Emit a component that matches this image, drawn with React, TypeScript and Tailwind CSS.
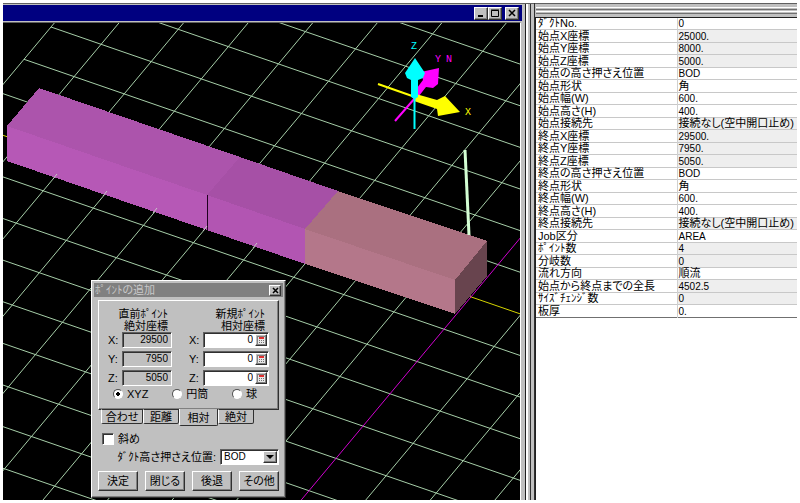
import { useId, useState, type ReactNode } from "react";

type Point = [number, number];

const ORIGIN: Point = [48, 4];
const ACROSS: Point = [50.1, 17.3];
const DOWN: Point = [-27, 32.3];

function at(col: number, row: number): Point {
  return [
    ORIGIN[0] + col * ACROSS[0] + row * DOWN[0],
    ORIGIN[1] + col * ACROSS[1] + row * DOWN[1],
  ];
}

function GridLine({ from, to, stroke }: { from: Point; to: Point; stroke: string }) {
  return <line x1={from[0]} y1={from[1]} x2={to[0]} y2={to[1]} stroke={stroke} strokeWidth={1} />;
}

function Scene() {
  const rows = Array.from({ length: 26 }, (_, i) => i - 6);
  const cols = Array.from({ length: 24 }, (_, i) => i);
  return (
    <svg
      className="absolute inset-0 h-full w-full bg-black"
      viewBox="0 0 517 477"
      preserveAspectRatio="xMinYMin slice"
      role="img"
      aria-label="3D"
    >
      {rows.map((r) => (
        <GridLine key={r} from={at(0, r)} to={at(24, r)} stroke={r === 3 ? "#d4d400" : "#a6cea8"} />
      ))}
      {cols.map((c) => (
        <GridLine key={c} from={at(c, -10)} to={at(c, 22)} stroke={c === 10 ? "#d000d0" : "#a6cea8"} />
      ))}
      <g shapeRendering="crispEdges">
        <polygon points="36,65 237,134 204,172 4,103" fill="#ac54ac" />
        <polygon points="237,134 335,168 302,206 204,172" fill="#a650a6" />
        <polygon points="335,168 484,218 452,257 302,206" fill="#aa7080" />
        <polygon points="4,103 204,172 204,207 4,138" fill="#b658b6" />
        <polygon points="204,172 302,206 302,241 204,207" fill="#b255b2" />
        <polygon points="302,206 452,257 452,291 302,241" fill="#b4778a" />
        <polygon points="452,257 484,218 484,253 452,291" fill="#68444e" />
        <line x1="204.500" y1="172" x2="204.500" y2="207" stroke="#200020" />
      </g>
      <path d="M50 156l4-5M100 173l4-5M150 190l4-5M200 208l4-5M250 225l4-5" stroke="#c8c8c8" />
      <path d="M462 127L466 212" stroke="#d4ffd4" strokeWidth="3" />
      <g>
        <path d="M412 75L392 98" stroke="#ff00ff" strokeWidth="2" />
        <path d="M408 73L420 57L418 49L436 45L435 61L430 65L423 64L412 78Z" fill="#ff00ff" />
        <path d="M375 61L412 74" stroke="#ffff00" strokeWidth="2" />
        <path d="M413 71L434 77L442 73L457 89L435 93L434 86L411 78Z" fill="#ffff00" />
        <path d="M411.500 74V106" stroke="#00ffff" strokeWidth="2" />
        <path d="M412 35L422 50L420 55L415 57V74L412 76L408 74V57L404 55L402 50Z" fill="#00ffff" />
      </g>
      <g className="font-['Liberation_Mono',monospace] text-[10px]">
        <text x="408" y="26" fill="#00ffff">Z</text>
        <text x="432" y="39" fill="#ff00ff">Y</text>
        <text x="443" y="39" fill="#ff00ff">N</text>
        <text x="462" y="92" fill="#ffff00">X</text>
      </g>
    </svg>
  );
}

const raised =
  "border border-t-white border-l-white border-r-[#303030] border-b-[#303030] bg-[#c0c0c0] shadow-[inset_-1px_-1px_0_#808080]";
const sunken =
  "border border-t-[#606060] border-l-[#606060] border-r-white border-b-white shadow-[inset_1px_1px_0_#303030]";

function CaptionButton({ label, children }: { label: string; children: ReactNode }) {
  return (
    <button aria-label={label} className={`flex h-[13px] w-[14px] items-center justify-center ${raised}`}>
      <svg className="h-2 w-2" viewBox="0 0 8 8" fill="none" stroke="black">
        {children}
      </svg>
    </button>
  );
}

function ViewWindow() {
  return (
    <section className="relative flex min-w-0 flex-1 flex-col border-t border-[#606060] bg-[#c0c0c0] pt-px">
      <header className="mr-px flex h-4 shrink-0 items-center justify-end bg-[#000080] pr-[3px]">
        <CaptionButton label="最小化">
          <path d="M1 7h5" strokeWidth="2" />
        </CaptionButton>
        <CaptionButton label="最大化">
          <path d="M0.500 1.500h7v6h-7zM0 1h8" />
        </CaptionButton>
        <span className="w-[3px]" />
        <CaptionButton label="閉じる">
          <path d="M1 1l6 6M7 1l-6 6" strokeWidth="1.500" />
        </CaptionButton>
      </header>
      <div className="mt-px mr-[2px] flex min-h-0 flex-1 border-t border-r border-t-[#606060] border-r-white bg-black">
        <div className="relative flex-1 overflow-hidden">
          <Scene />
          <PointDialog />
        </div>
      </div>
    </section>
  );
}

function CalcIcon() {
  return (
    <svg className="h-2 w-2" viewBox="0 0 8 8">
      <rect x="0" y="0" width="8" height="8" fill="#e8e8e8" />
      <path d="M0 0.500h8M0.500 0v8" stroke="#808080" />
      <path d="M2 2h5" stroke="#e03030" strokeWidth="2" />
      <path d="M2 4.500h1M4 4.500h1M6 4.500h1M2 6.500h1M4 6.500h1M6 6.500h1" stroke="#707070" />
    </svg>
  );
}

function Coordinates({ title, values, editable }: { title: [string, string]; values: string[]; editable?: boolean }) {
  const id = useId();
  return (
    <div className={editable ? "w-20" : "w-16"}>
      <h2 className="pr-1 text-right leading-3">
        {title[0]}
        <br />
        {title[1]}
      </h2>
      <div className="flex flex-col gap-[3px]">
        {["X", "Y", "Z"].map((axis, i) => (
          <div key={axis} className="flex h-4 items-center">
            <label htmlFor={id + axis} className="w-[14px] shrink-0">
              {axis}:
            </label>
            <div className={`flex h-4 min-w-0 flex-1 items-center p-px ${sunken} ${editable ? "bg-white" : ""}`}>
              <input
                id={id + axis}
                readOnly={!editable}
                defaultValue={values[i]}
                className="w-full min-w-0 bg-transparent pr-[2px] text-right text-[10px] outline-none"
              />
              {editable && (
                <button aria-label="電卓" className={`flex h-3 w-3 shrink-0 items-center justify-center ${raised}`}>
                  <CalcIcon />
                </button>
              )}
            </div>
          </div>
        ))}
      </div>
    </div>
  );
}

function Radio({ label, checked }: { label: string; checked?: boolean }) {
  return (
    <label className="flex items-center gap-1">
      <input
        type="radio"
        name="coordinate-system"
        defaultChecked={checked}
        className="h-[10px] w-[10px] appearance-none rounded-full border border-t-[#505050] border-r-white border-b-white border-l-[#505050] bg-white checked:bg-[radial-gradient(circle,black_0_2px,white_2px)]"
      />
      {label}
    </label>
  );
}

const tabs = ["合わせ", "距離", "相対", "絶対"];

function PointDialog() {
  const [tab, setTab] = useState("相対");
  return (
    <section
      role="dialog"
      aria-label="ポイントの追加"
      className={`absolute top-[257px] left-[88px] w-[195px] p-[2px] ${raised}`}
    >
      <header className="flex h-[14px] items-center justify-between bg-[#808080] pr-[2px] pl-px text-[#c8c8c8]">
        <h1>ﾎﾟｲﾝﾄの追加</h1>
        <button aria-label="閉じる" className={`flex h-[11px] w-3 items-center justify-center ${raised}`}>
          <svg className="h-[7px] w-[7px]" viewBox="0 0 7 7" stroke="black" strokeWidth="1.500">
            <path d="M1 1l5 5M6 1l-5 5" />
          </svg>
        </button>
      </header>
      <div className="px-1 pt-[3px] pb-1">
        <div className={`h-[110px] px-[9px] pt-[7px] ${raised}`}>
          <div className="flex justify-between">
            <Coordinates title={["直前ﾎﾟｲﾝﾄ", "絶対座標"]} values={["29500", "7950", "5050"]} />
            <Coordinates title={["新規ﾎﾟｲﾝﾄ", "相対座標"]} values={["0", "0", "0"]} editable />
          </div>
          <div className="mt-[2px] flex justify-between pr-3 pl-[5px]">
            <Radio label="XYZ" checked />
            <Radio label="円筒" />
            <Radio label="球" />
          </div>
        </div>
        <div role="tablist" className="-mt-px flex h-[17px] items-start pl-[3px]">
          {tabs.map((name) => (
            <button
              key={name}
              role="tab"
              aria-selected={name === tab}
              onClick={() => setTab(name)}
              className={`rounded-b-[2px] border-r border-b border-l border-r-[#303030] border-b-[#303030] border-l-white bg-[#c0c0c0] ${
                name === tab ? "h-[17px] pt-[2px]" : "h-[15px] border-t border-t-[#303030]"
              } ${name === "合わせ" ? "w-[42px]" : name === tab ? "w-[39px]" : "w-9"}`}
            >
              {name}
            </button>
          ))}
        </div>
        <label className="mt-[7px] flex items-center gap-1 pl-1">
          <input type="checkbox" className={`h-3 w-3 appearance-none bg-white checked:bg-black ${sunken}`} />
          斜め
        </label>
        <div className="mt-1 flex items-center justify-end gap-1">
          <label htmlFor="height-position">ﾀﾞｸﾄ高さ押さえ位置:</label>
          <div className={`relative flex h-4 w-[59px] items-center bg-white ${sunken}`}>
            <select
              id="height-position"
              className="w-full appearance-none bg-transparent pl-[3px] text-[10px] outline-none"
            >
              <option>BOD</option>
            </select>
            <span
              className={`pointer-events-none absolute top-px right-px flex h-3 w-[14px] items-center justify-center ${raised}`}
            >
              <svg className="h-1 w-2" viewBox="0 0 8 4">
                <path d="M0 0h8L4 4z" />
              </svg>
            </span>
          </div>
        </div>
        <div className="mt-[6px] flex justify-between">
          {["決定", "閉じる", "後退", "その他"].map((name) => (
            <button key={name} className={`h-5 w-10 ${raised}`}>
              {name}
            </button>
          ))}
        </div>
      </div>
    </section>
  );
}

type Property = { name: string; value: string; locked?: boolean };

const properties: Property[] = [
  { name: "ﾀﾞｸﾄNo.", value: "0" },
  { name: "始点X座標", value: "25000.", locked: true },
  { name: "始点Y座標", value: "8000.", locked: true },
  { name: "始点Z座標", value: "5000.", locked: true },
  { name: "始点の高さ押さえ位置", value: "BOD" },
  { name: "始点形状", value: "角" },
  { name: "始点幅(W)", value: "600." },
  { name: "始点高さ(H)", value: "400." },
  { name: "始点接続先", value: "接続なし(空中開口止め)", locked: true },
  { name: "終点X座標", value: "29500.", locked: true },
  { name: "終点Y座標", value: "7950.", locked: true },
  { name: "終点Z座標", value: "5050.", locked: true },
  { name: "終点の高さ押さえ位置", value: "BOD" },
  { name: "終点形状", value: "角" },
  { name: "終点幅(W)", value: "600." },
  { name: "終点高さ(H)", value: "400." },
  { name: "終点接続先", value: "接続なし(空中開口止め)", locked: true },
  { name: "Job区分", value: "AREA" },
  { name: "ﾎﾟｲﾝﾄ数", value: "4", locked: true },
  { name: "分岐数", value: "0", locked: true },
  { name: "流れ方向", value: "順流" },
  { name: "始点から終点までの全長", value: "4502.5", locked: true },
  { name: "ｻｲｽﾞﾁｪﾝｼﾞ数", value: "0", locked: true },
  { name: "板厚", value: "0." },
];

const isLatin = (text: string) => /^[A-Z0-9.]+$/.test(text);

function PropertyPanel() {
  return (
    <aside className="flex w-[263px] shrink-0 flex-col border-l border-[#303030]">
      <div className="flex h-[14px] shrink-0 flex-col justify-center gap-px border-t border-[#606060] bg-[#c0c0c0] pl-px">
        <div className="h-[3px] border-t border-b border-t-white border-b-[#707070]" />
        <div className="h-[3px] border-t border-b border-t-white border-b-[#707070]" />
      </div>
      <div className="flex-1 border-t border-l border-[#202020] bg-white">
        <table className="h-[300px] w-full table-fixed border-collapse border-b border-[#808080]">
          <tbody>
            {properties.map((p) => (
              <tr key={p.name} className="border-b border-[#c8c8c8] last:border-[#707070]">
                <th className="w-[141px] border-r border-[#d0d0d0] p-0 pl-[2px] text-left font-normal whitespace-nowrap">
                  <div className="h-[11px] leading-[11px]">{p.name}</div>
                </th>
                <td className={`p-0 pl-px whitespace-nowrap ${p.locked ? "bg-[#eeeeee]" : ""}`}>
                  <div className={`h-[11px] leading-[11px] ${isLatin(p.value) ? "text-[10px]" : ""}`}>{p.value}</div>
                </td>
              </tr>
            ))}
          </tbody>
        </table>
      </div>
    </aside>
  );
}

export default function App() {
  return (
    <main className="flex h-screen bg-white p-[3px] font-['Liberation_Sans','Noto_Sans_CJK_JP',sans-serif] text-[11px] leading-3 text-black [font-feature-settings:'palt']">
      <ViewWindow />
      <div className="flex w-[11px] shrink-0 border-t border-[#606060] bg-[#c0c0c0]">
        <span className="ml-[2px] w-px bg-[#202020]" />
        <span className="w-[2px] bg-white" />
        <span className="ml-[2px] w-px bg-[#303030]" />
      </div>
      <PropertyPanel />
    </main>
  );
}
